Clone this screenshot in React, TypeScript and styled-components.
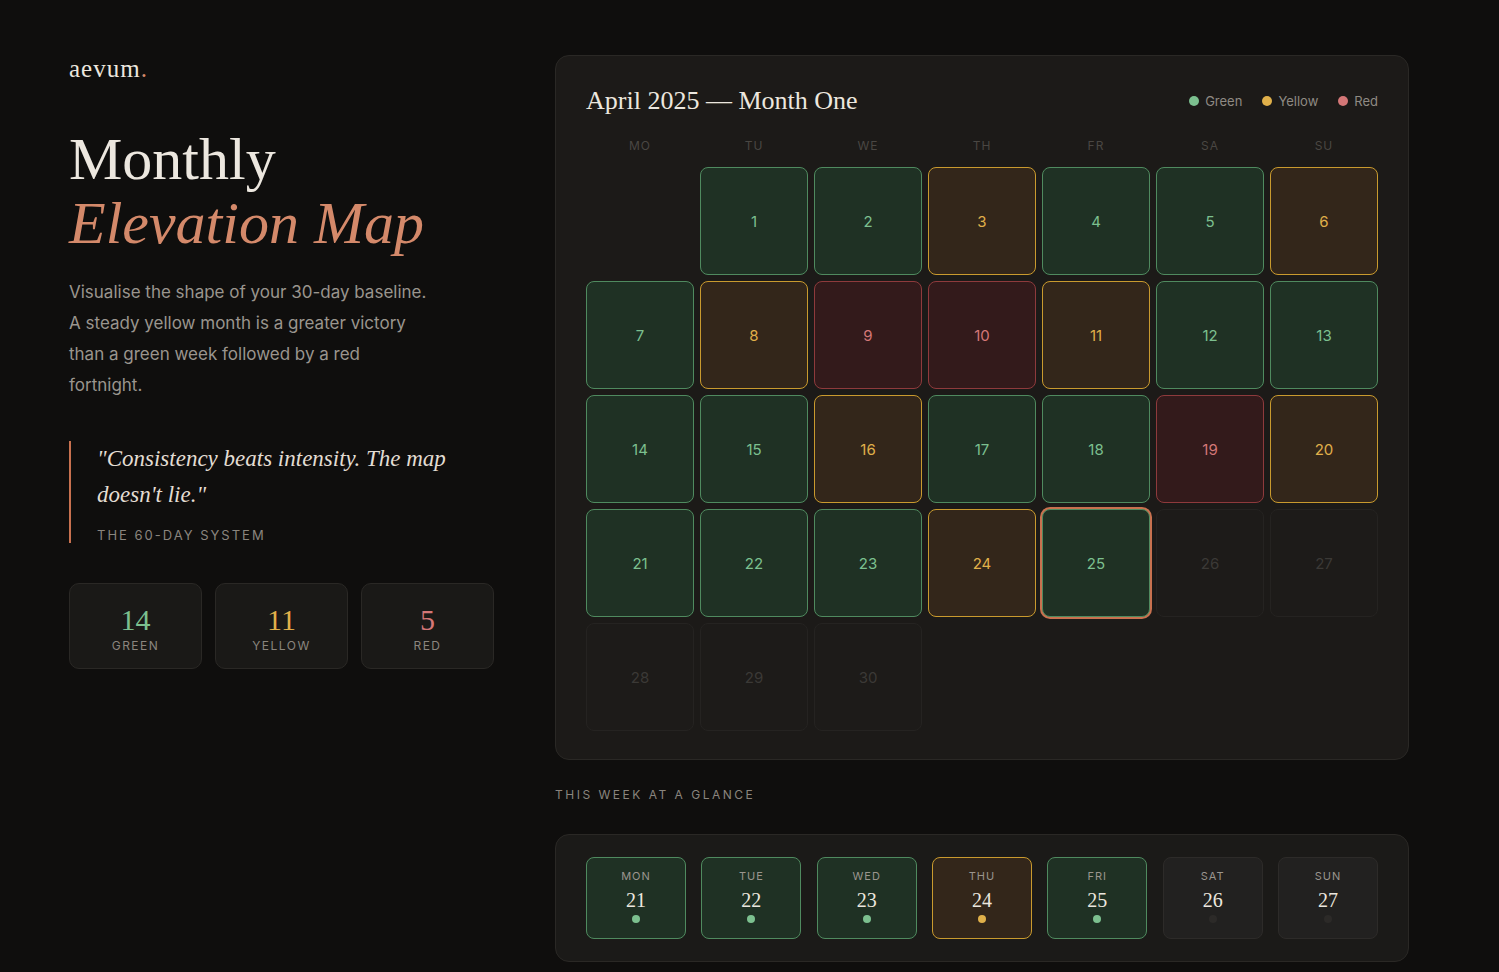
import React from 'react';
import styled, { createGlobalStyle } from 'styled-components';

type Tone = 'green' | 'yellow' | 'red' | 'empty';

const TONES: Record<Tone, { bg: string; border: string; text: string }> = {
	green: { bg: '#1f3124', border: '#4f8a5f', text: '#7cc08f' },
	yellow: { bg: '#33261a', border: '#c99a2e', text: '#e0b04a' },
	red: { bg: '#331a1b', border: '#8e3a3c', text: '#d47777' },
	empty: { bg: '#1d1b19', border: '#252321', text: '#3b3936' }
};

const SERIF = `"Liberation Serif", "DejaVu Serif", serif`;
const SANS = `Inter, "Noto Sans", sans-serif`;

const GlobalStyle = createGlobalStyle`
	body {
		margin: 0;
		background: #0f0e0d;
		font-family: ${SANS};
		color: #ece7df;
	}
`;

const Page = styled.div`
	display: flex;
	gap: 61px;
	padding: 55px 0 0 69px;
	min-height: 972px;
	box-sizing: border-box;
`;

const Left = styled.div`
	width: 425px;
	display: flex;
	flex-direction: column;
`;

const Logo = styled.div`
	font-family: ${SERIF};
	font-size: 25px;
	letter-spacing: 1px;
	color: #ece7df;
	span { color: #d4896a; }
`;

const Heading = styled.h1`
	margin: 44px 0 0;
	font-family: ${SERIF};
	font-weight: 400;
	font-size: 60px;
	line-height: 64px;
	color: #ece7df;
	em {
		display: block;
		color: #d4896a;
		font-style: italic;
	}
`;

const Intro = styled.p`
	margin: 22px 0 0;
	width: 360px;
	font-size: 17px;
	line-height: 31px;
	color: #9a958e;
`;

const Quote = styled.blockquote`
	margin: 40px 0 0;
	padding: 0 0 0 26px;
	border-left: 2px solid #c8714f;
`;

const QuoteText = styled.div`
	font-family: ${SERIF};
	font-style: italic;
	font-size: 23px;
	line-height: 36px;
	color: #e3ddd3;
	width: 350px;
`;

const QuoteSource = styled.div`
	margin-top: 14px;
	font-size: 13px;
	letter-spacing: 2px;
	color: #8a857e;
`;

const Stats = styled.div`
	margin-top: 40px;
	display: grid;
	grid-template-columns: repeat(3, 133px);
	gap: 13px;
`;

const StatCard = styled.div`
	height: 86px;
	box-sizing: border-box;
	background: #1a1917;
	border: 1px solid #2a2825;
	border-radius: 10px;
	display: flex;
	flex-direction: column;
	align-items: center;
	justify-content: center;
	padding-top: 6px;
`;

const StatValue = styled.div<{ $color: string }>`
	font-family: ${SERIF};
	font-size: 30px;
	line-height: 28px;
	color: ${(p) => p.$color};
`;

const StatLabel = styled.div`
	margin-top: 4px;
	font-size: 12px;
	letter-spacing: 1.5px;
	color: #8a857e;
`;

const Right = styled.div`
	width: 854px;
	display: flex;
	flex-direction: column;
`;

const Panel = styled.div`
	background: #1c1a18;
	border: 1px solid #2a2825;
	border-radius: 14px;
	padding: 30px 30px 28px;
`;

const PanelHead = styled.div`
	display: flex;
	justify-content: space-between;
	align-items: center;
`;

const PanelTitle = styled.h2`
	margin: 0;
	font-family: ${SERIF};
	font-weight: 400;
	font-size: 26px;
	color: #ece7df;
`;

const Legend = styled.div`
	display: flex;
	gap: 20px;
	font-size: 13px;
	color: #8f8a83;
`;

const LegendItem = styled.span<{ $color: string }>`
	display: flex;
	align-items: center;
	gap: 6px;
	&::before {
		content: '';
		width: 10px;
		height: 10px;
		border-radius: 50%;
		background: ${(p) => p.$color};
	}
`;

const Grid = styled.div`
	display: grid;
	grid-template-columns: repeat(7, 108px);
	gap: 6px;
	margin-top: 22px;
`;

const Weekday = styled.div`
	text-align: center;
	font-size: 12px;
	letter-spacing: 1px;
	color: #4a4743;
	margin-bottom: 8px;
`;

const Cell = styled.div<{ $tone: Tone; $today?: boolean }>`
	height: 108px;
	box-sizing: border-box;
	border-radius: 8px;
	background: ${(p) => TONES[p.$tone].bg};
	border: 1px solid ${(p) => TONES[p.$tone].border};
	color: ${(p) => TONES[p.$tone].text};
	box-shadow: ${(p) => (p.$today ? '0 0 0 2px #c8714f' : 'none')};
	display: flex;
	align-items: center;
	justify-content: center;
	font-size: 15px;
`;

const Blank = styled.div`
	height: 108px;
`;

const SectionLabel = styled.div`
	margin: 27px 0 32px;
	font-size: 12px;
	letter-spacing: 2.5px;
	color: #8a857e;
`;

const WeekPanel = styled.div`
	background: #1b1a18;
	border: 1px solid #2a2825;
	border-radius: 14px;
	padding: 22px 30px;
	display: grid;
	grid-template-columns: repeat(7, 100px);
	justify-content: space-between;
`;

const WeekDay = styled.div<{ $tone: Tone }>`
	height: 82px;
	box-sizing: border-box;
	border-radius: 8px;
	background: ${(p) => (p.$tone === 'empty' ? '#222120' : TONES[p.$tone].bg)};
	border: 1px solid ${(p) => (p.$tone === 'empty' ? '#2d2b29' : TONES[p.$tone].border)};
	display: flex;
	flex-direction: column;
	align-items: center;
	padding-top: 11px;
`;

const WeekName = styled.div`
	font-size: 11px;
	letter-spacing: 1px;
	color: #9a958e;
`;

const WeekNum = styled.div`
	margin-top: 6px;
	font-family: ${SERIF};
	font-size: 20px;
	color: #ece7df;
`;

const Dot = styled.div<{ $tone: Tone }>`
	margin-top: 3px;
	width: 8px;
	height: 8px;
	border-radius: 50%;
	background: ${(p) => (p.$tone === 'empty' ? '#2c2a28' : TONES[p.$tone].text)};
`;

const DAYS: Tone[] = [
	'green', 'green', 'yellow', 'green', 'green', 'yellow',
	'green', 'yellow', 'red', 'red', 'yellow', 'green', 'green',
	'green', 'green', 'yellow', 'green', 'green', 'red', 'yellow',
	'green', 'green', 'green', 'yellow', 'green', 'empty', 'empty',
	'empty', 'empty', 'empty'
];

const WEEK = [
	{ name: 'MON', n: 21 }, { name: 'TUE', n: 22 }, { name: 'WED', n: 23 },
	{ name: 'THU', n: 24 }, { name: 'FRI', n: 25 }, { name: 'SAT', n: 26 }, { name: 'SUN', n: 27 }
];

const App: React.FC = () => (
	<>
		<GlobalStyle />
		<Page>
			<Left>
				<Logo>aevum<span>.</span></Logo>
				<Heading>
					Monthly
					<em>Elevation Map</em>
				</Heading>
				<Intro>
					Visualise the shape of your 30-day baseline. A steady yellow month is a greater
					victory than a green week followed by a red fortnight.
				</Intro>
				<Quote>
					<QuoteText>"Consistency beats intensity. The map doesn't lie."</QuoteText>
					<QuoteSource>THE 60-DAY SYSTEM</QuoteSource>
				</Quote>
				<Stats>
					<StatCard><StatValue $color="#7cc08f">14</StatValue><StatLabel>GREEN</StatLabel></StatCard>
					<StatCard><StatValue $color="#e0b04a">11</StatValue><StatLabel>YELLOW</StatLabel></StatCard>
					<StatCard><StatValue $color="#d47777">5</StatValue><StatLabel>RED</StatLabel></StatCard>
				</Stats>
			</Left>
			<Right>
				<Panel>
					<PanelHead>
						<PanelTitle>April 2025 — Month One</PanelTitle>
						<Legend>
							<LegendItem $color="#7cc08f">Green</LegendItem>
							<LegendItem $color="#e0b04a">Yellow</LegendItem>
							<LegendItem $color="#d47777">Red</LegendItem>
						</Legend>
					</PanelHead>
					<Grid>
						{['MO', 'TU', 'WE', 'TH', 'FR', 'SA', 'SU'].map((d) => (
							<Weekday key={d}>{d}</Weekday>
						))}
						<Blank />
						{DAYS.map((tone, i) => (
							<Cell key={i} $tone={tone} $today={i + 1 === 25}>{i + 1}</Cell>
						))}
					</Grid>
				</Panel>
				<SectionLabel>THIS WEEK AT A GLANCE</SectionLabel>
				<WeekPanel>
					{WEEK.map((d) => {
						const tone = DAYS[d.n - 1];
						return (
							<WeekDay key={d.n} $tone={tone}>
								<WeekName>{d.name}</WeekName>
								<WeekNum>{d.n}</WeekNum>
								<Dot $tone={tone} />
							</WeekDay>
						);
					})}
				</WeekPanel>
			</Right>
		</Page>
	</>
);

export default App;
